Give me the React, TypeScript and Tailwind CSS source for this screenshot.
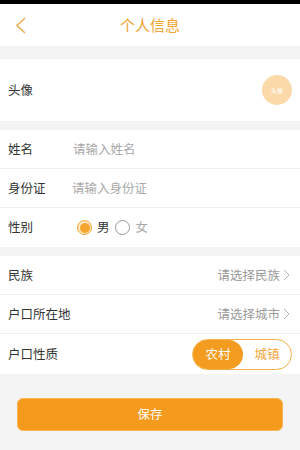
import React from 'react'

const font = { fontFamily: '"Noto Sans CJK SC", "Noto Sans", sans-serif' }

function Chevron() {
  return (
    <svg width="7" height="12" viewBox="0 0 7 12" className="ml-[3px]">
      <path d="M1 1 L6 6 L1 11" fill="none" stroke="#b5b5b5" strokeWidth="1" />
    </svg>
  )
}

function Row({ label, children, last }: { label: string; children?: React.ReactNode; last?: boolean }) {
  return (
    <div className={'flex items-center h-[39px] pl-[8px] pr-[10px] bg-white ' + (last ? '' : 'border-b border-[#efefef]')}>
      <span className="w-[64px] shrink-0 whitespace-nowrap text-[12.5px] text-[#333]">{label}</span>
      {children}
    </div>
  )
}

export default function App() {
  return (
    <div className="w-[300px] h-[450px] bg-[#f4f4f4] overflow-hidden" style={font}>
      <div className="h-[4px] bg-black" />
      <div className="h-[42px] bg-white flex items-center">
        <div className="w-[40px] pl-[15px]">
          <svg width="12" height="17" viewBox="0 0 12 17">
            <path d="M10 1 L2 8.5 L10 16" fill="none" stroke="#ecb055" strokeWidth="1.6" />
          </svg>
        </div>
        <div className="flex-1 text-center text-[15px] text-[#f0a534]">个人信息</div>
        <div className="w-[40px]" />
      </div>

      <div className="h-[13px]" />
      <div className="h-[62px] bg-white flex items-center justify-between pl-[8px] pr-[8px]">
        <span className="text-[12.5px] text-[#333]">头像</span>
        <div className="w-[30px] h-[30px] rounded-full bg-[#fbd9a9] flex items-center justify-center">
          <span className="text-[6px] text-white">头像</span>
        </div>
      </div>

      <div className="h-[9px]" />
      <Row label="姓名">
        <span className="text-[12.5px] text-[#a9a9a9] ml-[1px]">请输入姓名</span>
      </Row>
      <Row label="身份证">
        <span className="text-[12.5px] text-[#a9a9a9]">请输入身份证</span>
      </Row>
      <Row label="性别" last>
        <div className="flex items-center ml-[5px]">
          <span className="w-[15px] h-[15px] rounded-full border border-[#f4a52c] flex items-center justify-center bg-[#fde7c4]">
            <span className="w-[10px] h-[10px] rounded-full bg-[#f4a52c]" />
          </span>
          <span className="ml-[5px] text-[12.5px] text-[#333]">男</span>
          <span className="ml-[5px] w-[15px] h-[15px] rounded-full border-[1.5px] border-[#9a9a9a]" />
          <span className="ml-[6px] text-[12.5px] text-[#a9a9a9]">女</span>
        </div>
      </Row>

      <div className="h-[9px]" />
      <Row label="民族">
        <div className="flex-1 flex items-center justify-end">
          <span className="text-[12.5px] text-[#999]">请选择民族</span>
          <Chevron />
        </div>
      </Row>
      <Row label="户口所在地">
        <div className="flex-1 flex items-center justify-end">
          <span className="text-[12.5px] text-[#999]">请选择城市</span>
          <Chevron />
        </div>
      </Row>
      <div className="flex items-center h-[40px] pl-[8px] pr-[8px] bg-white">
        <span className="flex-1 text-[12.5px] text-[#333]">户口性质</span>
        <div className="flex w-[100px] h-[31px] rounded-full border border-[#f4b14a] bg-white">
          <div className="w-[50px] h-full rounded-full bg-[#f39c1f] flex items-center justify-center text-[12.5px] text-white">农村</div>
          <div className="flex-1 flex items-center justify-center text-[12.5px] text-[#f3a53a]">城镇</div>
        </div>
      </div>

      <div className="px-[17px] pt-[24px]">
        <div className="h-[33px] rounded-[6px] bg-[#f49b1e] border border-[#f7b650] flex items-center justify-center text-[12.5px] text-white">
          保存
        </div>
      </div>
    </div>
  )
}
